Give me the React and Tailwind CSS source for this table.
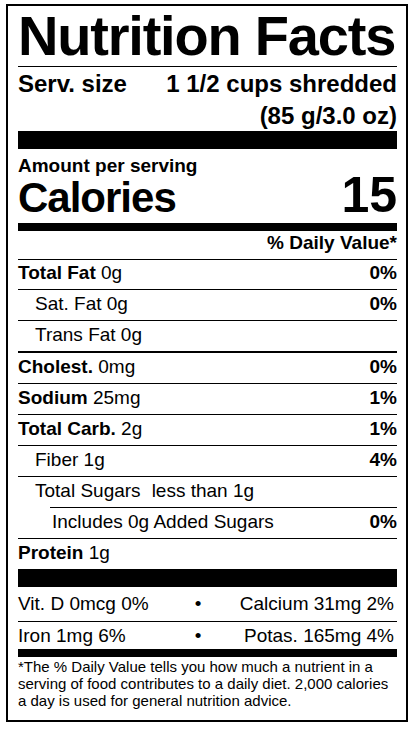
import React from 'react';

const Line = ({ className = '' }) => <div className={`h-px bg-black ${className}`} />;

const Row = ({ label, amount, pct, indent = '', first = false }) => (
  <div
    className={`flex justify-between text-[19px] ${
      first ? 'h-[29px] leading-[26px]' : 'h-[30px] leading-[28px]'
    } ${indent}`}
  >
    <span>
      {label && <span className="font-bold">{label}</span>}
      {amount}
    </span>
    {pct && <span className="font-bold">{pct}</span>}
  </div>
);

const App = () => {
  return (
    <div className="min-h-screen bg-white pt-[4px] pl-[6px] text-black font-['Liberation_Sans',Arial,sans-serif]">
      <div className="w-[402px] h-[718px] border-2 border-black pl-[10px] pr-[9px]">
        <h1 className="text-[56px] font-bold leading-[60px] tracking-[-1.2px]">Nutrition Facts</h1>
        <Line />

        <div className="flex justify-between text-[24px] font-bold leading-[33px]">
          <span>Serv. size</span>
          <span>1 1/2 cups shredded</span>
        </div>
        <div className="text-right text-[24px] font-bold leading-[31px]">(85 g/3.0 oz)</div>
        <div className="h-[18px] bg-black" />

        <div className="pt-[7px] text-[19px] font-bold leading-[20px]">Amount per serving</div>
        <div className="flex items-baseline justify-between font-bold">
          <span className="text-[42px] leading-[38px] tracking-[-1px]">Calories</span>
          <span className="text-[50px] leading-[38px]">15</span>
        </div>
        <div className="mt-[6px] h-[8px] bg-black" />

        <div className="pb-[4px] text-right text-[19px] font-bold leading-[24px]">% Daily Value*</div>
        <Line />

        <Row first label="Total Fat" amount=" 0g" pct="0%" />
        <Line />
        <Row amount="Sat. Fat 0g" pct="0%" indent="pl-[17px]" />
        <Line />
        <Row amount="Trans Fat 0g" indent="pl-[17px]" />
        <div className="h-[2px] bg-black" />
        <Row label="Cholest." amount=" 0mg" pct="0%" />
        <Line />
        <Row label="Sodium" amount=" 25mg" pct="1%" />
        <Line />
        <Row label="Total Carb." amount=" 2g" pct="1%" />
        <Line />
        <Row amount="Fiber 1g" pct="4%" indent="pl-[17px]" />
        <Line />
        <div className="flex h-[30px] pl-[17px] text-[19px] leading-[28px]">
          <span>Total Sugars</span>
          <span className="ml-[11px]">less than 1g</span>
        </div>
        <Line className="ml-[32px]" />
        <Row amount="Includes 0g Added Sugars" pct="0%" indent="pl-[34px]" />
        <Line />
        <Row label="Protein" amount=" 1g" />
        <div className="h-[18px] bg-black" />

        <div className="grid grid-cols-[170px_20px_1fr] text-[19px] leading-[34px]">
          <span>Vit. D 0mcg 0%</span>
          <span className="text-center">•</span>
          <span className="text-right pr-[3px]">Calcium 31mg 2%</span>
        </div>
        <Line />
        <div className="grid grid-cols-[170px_20px_1fr] text-[19px] leading-[27px]">
          <span>Iron 1mg 6%</span>
          <span className="text-center">•</span>
          <span className="text-right pr-[3px]">Potas. 165mg 4%</span>
        </div>
        <div className="h-[8px] bg-black" />

        <p className="pt-[1px] text-[15px] leading-[17px]">
          *The % Daily Value tells you how much a nutrient in a
          <br />
          serving of food contributes to a daily diet. 2,000 calories
          <br />
          a day is used for general nutrition advice.
        </p>
      </div>
    </div>
  );
};

export default App;
